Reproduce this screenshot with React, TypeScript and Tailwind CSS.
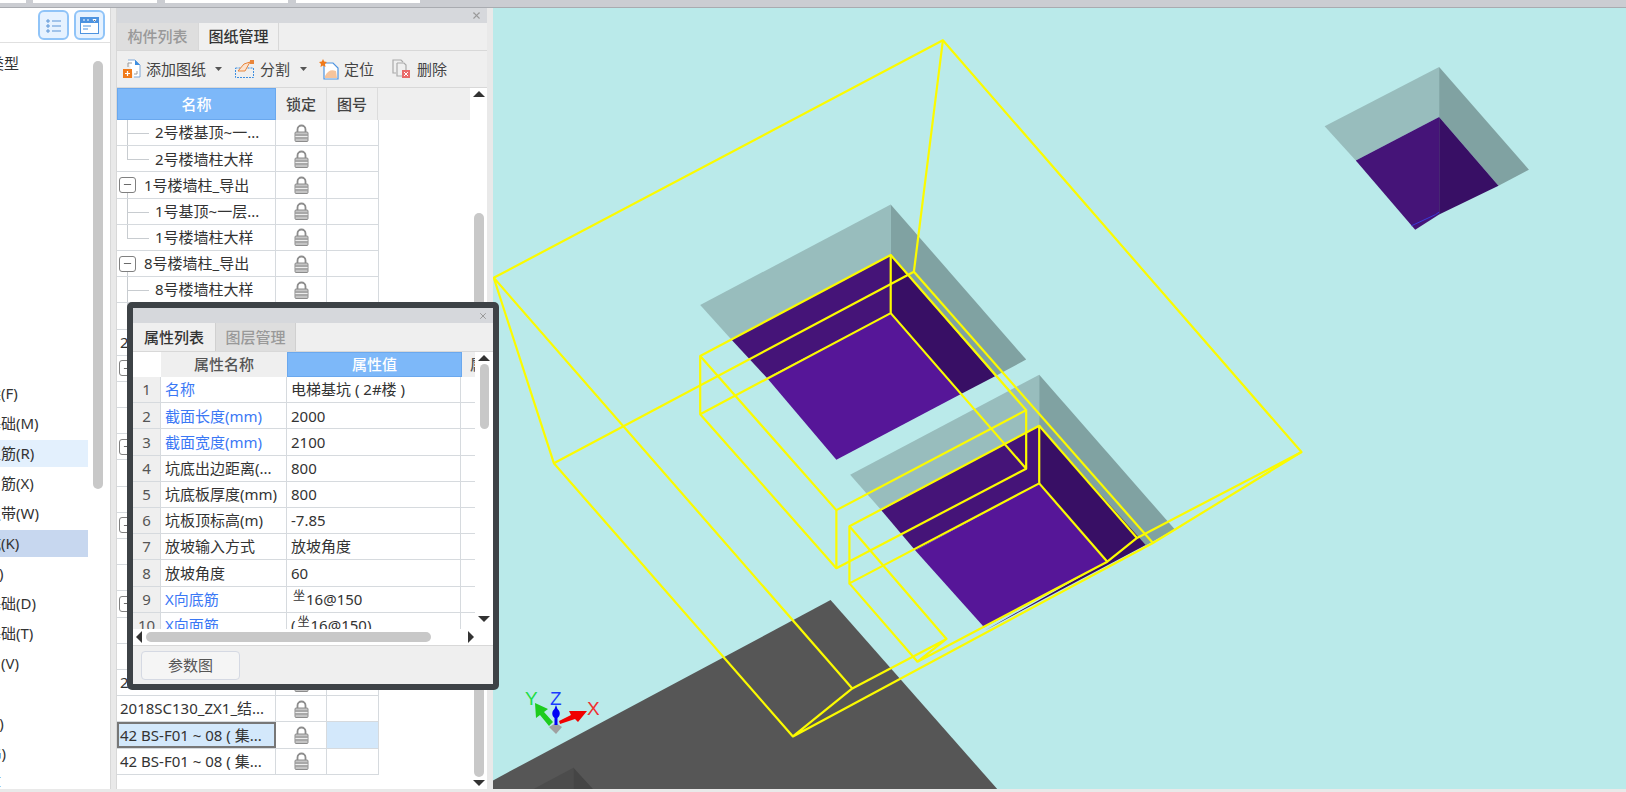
import { Minus, X } from "lucide-react"

type TreeRow = { name: string; kind: "root" | "parent" | "child" | "last"; selected?: boolean }

const drawingRows: TreeRow[] = [
    { name: "2号楼基顶~一...", kind: "child" },
    { name: "2号楼墙柱大样", kind: "last" },
    { name: "1号楼墙柱_导出", kind: "parent" },
    { name: "1号基顶~一层...", kind: "child" },
    { name: "1号楼墙柱大样", kind: "last" },
    { name: "8号楼墙柱_导出", kind: "parent" },
    { name: "8号楼墙柱大样", kind: "child" },
    { name: "8号基顶~一层...", kind: "last" },
    { name: "2018SC130_ZX...", kind: "root" },
    { name: "3号楼墙柱_导出", kind: "parent" },
    { name: "3号基顶~一层...", kind: "child" },
    { name: "3号楼墙柱大样", kind: "last" },
    { name: "5号楼墙柱_导出", kind: "parent" },
    { name: "5号基顶~一层...", kind: "child" },
    { name: "5号楼墙柱大样", kind: "last" },
    { name: "6号楼墙柱_导出", kind: "parent" },
    { name: "6号基顶~一层...", kind: "child" },
    { name: "6号楼墙柱大样", kind: "last" },
    { name: "7号楼墙柱_导出", kind: "parent" },
    { name: "7号基顶~一层...", kind: "child" },
    { name: "7号楼墙柱大样", kind: "last" },
    { name: "2018SC130_ZX1_结...", kind: "root" },
    { name: "2018SC130_ZX1_结...", kind: "root" },
    { name: "42 BS-F01 ~ 08 ( 集...", kind: "root", selected: true },
    { name: "42 BS-F01 ~ 08 ( 集...", kind: "root" },
]

// 30px rows, the text is cut off by the left edge of the window
const sideRows = [
    "常用构件类型", "", "", "", "", "", "", "", "", "", "",
    "基础梁(F)", "筏板基础(M)", "筏板主筋(R)", "筏板负筋(X)", "基础板带(W)", "集水坑(K)", "柱墩(Y)",
    "独立基础(D)", "条形基础(T)", "桩承台(V)", "桩(U)", "垫层(X)", "地沟(G)", "砖胎膜",
]

const props = [
    { label: "名称", value: "电梯基坑 ( 2#楼 )", blue: true },
    { label: "截面长度(mm)", value: "2000", blue: true },
    { label: "截面宽度(mm)", value: "2100", blue: true },
    { label: "坑底出边距离(...", value: "800" },
    { label: "坑底板厚度(mm)", value: "800" },
    { label: "坑板顶标高(m)", value: "-7.85" },
    { label: "放坡输入方式", value: "放坡角度" },
    { label: "放坡角度", value: "60" },
    { label: "X向底筋", value: "16@150", blue: true, bar: true },
    { label: "X向面筋", value: "16@150", blue: true, bar: true, paren: true },
]

// wireframe edges, in the canvas svg's own units
const edges = [
    "5,550 625,80 1120,895 915,1075 418,1458 88,917 5,550 500,1363 418,1458",
    "625,80 585,538 88,917",
    "585,538 915,1075",
    "500,1363 630,1265 590,1310 852,1112 893,1065 1120,895",
    "290,705 553,505 553,620 290,820 290,705 478,1010 478,1125 290,820",
    "553,505 740,812 740,928 553,620",
    "478,1010 740,812",
    "478,1125 740,928",
    "496,1042 758,843 758,957 496,1155 496,1042 630,1265",
    "590,1310 496,1155",
    "758,843 893,1065",
    "758,957 852,1112",
]

function Lock() {
    return (
        <svg width="15" height="18" viewBox="0 0 15 18">
            <path d="M3.500 9V5.500a4 4 0 0 1 8 0V9" fill="none" stroke="#8c8c8c" strokeWidth="1.800" />
            <rect x="1" y="8" width="13" height="9.500" rx="1" fill="#c4c4c4" stroke="#8c8c8c" />
            <path d="M1.500 11h12M1.500 14h12" stroke="#8c8c8c" />
            <path d="M1.500 12.500h12" stroke="#ececec" />
        </svg>
    )
}

function Caret({ dir }: { dir: "up" | "down" | "left" | "right" }) {
    const d = { up: "M0 7 6 1l6 6z", down: "M0 1h12L6 7z", left: "M7 0v12L1 6z", right: "M1 0v12l6-6z" }[dir]
    const box = dir === "up" || dir === "down" ? "0 0 12 8" : "0 0 8 12"
    const size = dir === "up" || dir === "down" ? "w-3 h-2" : "w-2 h-3"
    return (
        <svg viewBox={box} className={size}>
            <path d={d} fill="#333" />
        </svg>
    )
}

function TreeCell({ row }: { row: TreeRow }) {
    if (row.kind === "root") {
        return <span className={`truncate ${row.selected ? "pl-[1px]" : "pl-[3px]"}`}>{row.name}</span>
    }
    if (row.kind === "parent") {
        return (
            <>
                <span className="absolute left-[10px] top-[21px] bottom-0 w-px bg-[#c8ccd0]" />
                <span className="ml-[2px] w-[17px] h-[16px] rounded-[3px] border border-[#808080] flex items-center justify-center shrink-0 bg-white">
                    <Minus size={11} strokeWidth={1.6} color="#333" />
                </span>
                <span className="ml-2 truncate">{row.name}</span>
            </>
        )
    }
    return (
        <>
            <span className={`absolute left-[10px] top-0 w-px bg-[#c8ccd0] ${row.kind === "last" ? "h-[13px]" : "h-full"}`} />
            <span className="absolute left-[10px] top-[13px] w-[22px] h-px bg-[#c8ccd0]" />
            <span className="ml-[38px] truncate">{row.name}</span>
        </>
    )
}

function SidePanel() {
    return (
        <div className="w-[111px] bg-white border-r border-[#d8d8d8] flex flex-col overflow-hidden">
            <div className="h-[35px] shrink-0 border-b border-[#e0e0e0] flex justify-end items-center gap-[5px] pr-[5px]">
                <div className="w-[31px] h-[30px] rounded-md bg-[#e6f2ff] border-2 border-[#90c4f8] flex items-center justify-center">
                    <svg width="16" height="15" viewBox="0 0 16 15" fill="none" stroke="#5b94d6">
                        <path d="M1 2h2v2H1zM1 7h2v2H1zM1 12h2v2H1zM6 3h9M6 8h9M6 13h9" />
                    </svg>
                </div>
                <div className="w-[31px] h-[30px] rounded-md bg-[#e6f2ff] border-2 border-[#90c4f8] flex items-center justify-center">
                    <svg width="19" height="17" viewBox="0 0 19 17">
                        <rect x="0.5" y="0.5" width="18" height="16" fill="#fff" stroke="#4d93e0" />
                        <rect x="1" y="1" width="17" height="5" fill="#4d93e0" />
                        <path d="M3 3h2M7 3h2M13 2.5h3l-1.5 2z" stroke="#fff" />
                        <path d="M3 9h8M3 12h5" stroke="#4d93e0" />
                    </svg>
                </div>
            </div>
            <div className="flex-1 flex min-h-0 overflow-hidden">
                <div className="w-[88px] shrink-0 pt-[5px] overflow-hidden">
                    {sideRows.map((t, i) => (
                        <div key={i} className="h-[30px] flex items-center overflow-hidden">
                            <div className={`w-full h-[27px] flex items-center overflow-hidden ${t === "筏板主筋(R)" ? "bg-[#e3f0fd]" : ""} ${t === "集水坑(K)" ? "bg-[#c7d7ef]" : ""}`}>
                                <span className={`whitespace-nowrap text-[15px] leading-none text-[#333] ${i === 0 ? "ml-[-71px]" : "ml-[-44px]"}`}>{t}</span>
                            </div>
                        </div>
                    ))}
                </div>
                <div className="ml-[5px] mt-[18px] w-[10px] h-[428px] rounded-full bg-[#c8c8c8]" />
            </div>
        </div>
    )
}

function DrawingPanel() {
    return (
        <div className="w-[371px] ml-[5px] flex flex-col bg-white border-l border-[#d8d8d8]">
            <div className="h-[15px] shrink-0 bg-[#d6d8dc] flex items-center justify-end pr-[5px]">
                <X size={11} strokeWidth={2.4} color="#9a9a9a" />
            </div>
            <div className="h-[28px] shrink-0 bg-[#efefef] border-b border-[#d8d8d8] flex text-[15px]">
                <div className="w-[81px] bg-[#dedede] text-[#999] font-medium flex items-center justify-center">构件列表</div>
                <div className="w-[81px] border-x border-[#d8d8d8] bg-[#f0f0f0] text-[#333] font-medium flex items-center justify-center">图纸管理</div>
            </div>
            <div className="h-[37px] shrink-0 bg-[#efefef] border-b border-[#d8d8d8] flex items-center text-[15px] text-[#444]">
                <svg width="20" height="20" viewBox="0 0 20 20" className="ml-[5px]">
                    <path d="M6 1h7l5 5v12h-6" fill="#fff" stroke="#7fa8d8" />
                    <path d="M13 1v5h5z" fill="#3f8fe0" />
                    <path d="M6 8V4h4M15 12v3h-3" fill="none" stroke="#999" />
                    <rect x="1" y="10" width="9" height="9" fill="#f07a1a" />
                    <path d="M5.500 12v5M3 14.500h5" stroke="#fff" strokeWidth="1.200" />
                </svg>
                <span className="ml-[4px]">添加图纸</span>
                <span className="ml-[9px]"><svg width="7" height="4" viewBox="0 0 7 4"><path d="M0 0h7L3.500 4z" fill="#555" /></svg></span>
                <svg width="21" height="20" viewBox="0 0 21 20" className="ml-[12px]">
                    <rect x="1.500" y="9" width="18" height="9.500" fill="none" stroke="#3f8fe0" strokeDasharray="2 1" />
                    <path d="M4 12 10 5l6-2-5 9z" fill="#fbe3d0" stroke="#e9853a" />
                    <rect x="16" y="1" width="4" height="4" fill="#e9853a" />
                </svg>
                <span className="ml-[5px]">分割</span>
                <span className="ml-[10px]"><svg width="7" height="4" viewBox="0 0 7 4"><path d="M0 0h7L3.500 4z" fill="#555" /></svg></span>
                <svg width="20" height="21" viewBox="0 0 20 21" className="ml-[12px]">
                    <path d="M5 4h9l5 5v11H5z" fill="#fff" stroke="#4d93e0" strokeWidth="1.200" />
                    <path d="M6 17q4-8 11-5l1 7H6z" fill="#f6c49c" />
                    <path d="M4 0l1.200 2.600L8 3 6 5l.5 3L4 6.600 1.500 8 2 5 0 3l2.800-.4z" fill="#f07a1a" />
                </svg>
                <span className="ml-[5px]">定位</span>
                <svg width="19" height="20" viewBox="0 0 19 20" className="ml-[18px]">
                    <path d="M4 14H1V1h8l2 2" fill="none" stroke="#aaa" strokeWidth="1.200" />
                    <path d="M5 4h7l2 2v7M5 4v13h5" fill="none" stroke="#aaa" strokeWidth="1.200" />
                    <rect x="10" y="11" width="8" height="8" fill="#e96a6a" />
                    <path d="M12 13l4 4M16 13l-4 4" stroke="#fff" />
                </svg>
                <span className="ml-[6px]">删除</span>
            </div>
            <div className="flex-1 flex min-h-0">
                <div className="flex-1 min-w-0 overflow-hidden">
                    <div className="h-[32px] bg-[#efefef] flex text-[15px] font-medium text-[#444]">
                        <div className="w-[159px] bg-[#7db8f9] border border-[#6aa8ee] text-white flex items-center justify-center">名称</div>
                        <div className="w-[51px] border-r border-[#dcdcdc] flex items-center justify-center">锁定</div>
                        <div className="w-[51px] border-r border-[#dcdcdc] flex items-center justify-center">图号</div>
                    </div>
                    {drawingRows.map((row, i) => (
                        <div key={i} className="h-[26.2px] w-[262px] flex text-[15px] text-[#333] border-b border-[#d6dade]">
                            <div className={`relative w-[159px] shrink-0 flex items-center overflow-hidden ${row.selected ? "bg-[#d3e8fb] border-2 border-[#777]" : "border-r border-[#d6dade]"}`}>
                                <TreeCell row={row} />
                            </div>
                            <div className="w-[51px] border-r border-[#d6dade] flex items-center justify-center">
                                <Lock />
                            </div>
                            <div className={`w-[52px] border-r border-[#d6dade] ${row.selected ? "bg-[#d3e8fb]" : ""}`} />
                        </div>
                    ))}
                </div>
                <div className="w-[17px] shrink-0 flex flex-col items-center pt-[2px] pb-[2px]">
                    <Caret dir="up" />
                    <div className="mt-[115px] w-[10px] flex-1 rounded-full bg-[#c8c8c8]" />
                    <div className="mt-[2px]"><Caret dir="down" /></div>
                </div>
            </div>
        </div>
    )
}

function PropertyPanel() {
    return (
        <div className="absolute left-[127px] top-[302px] w-[372px] h-[388px] bg-[#3d4246] rounded-[5px] p-[6px] text-[15px]">
            <div className="w-full h-full flex flex-col bg-white">
                <div className="h-[15px] shrink-0 bg-[#d6d8dc] flex items-center justify-end pr-[5px]">
                    <X size={10} strokeWidth={2.4} color="#9a9a9a" />
                </div>
                <div className="h-[29px] shrink-0 bg-[#efefef] border-b border-[#d8d8d8] flex">
                    <div className="w-[82px] text-[#333] font-medium flex items-center justify-center">属性列表</div>
                    <div className="w-[81px] bg-[#dedede] border-x border-[#d0d0d0] text-[#999] font-medium flex items-center justify-center">图层管理</div>
                </div>
                <div className="h-[277px] shrink-0 flex overflow-hidden">
                    <div className="flex-1 min-w-0 overflow-hidden">
                        <div className="h-[25px] flex font-medium text-[#555]">
                            <div className="w-[28px] shrink-0" />
                            <div className="w-[126px] shrink-0 bg-[#efefef] flex items-center justify-center">属性名称</div>
                            <div className="w-[175px] shrink-0 bg-[#7db8f9] border border-[#6aa8ee] text-white flex items-center justify-center">属性值</div>
                            <div className="flex-1 bg-[#efefef] overflow-hidden pl-2 whitespace-nowrap flex items-center">属性</div>
                        </div>
                        {props.map((p, i) => (
                            <div key={i} className="h-[26.2px] flex border-b border-[#d6dade] text-[#333]">
                                <div className="w-[28px] shrink-0 bg-[#efefef] border-r border-[#d6dade] flex items-center justify-center text-[#555]">{i + 1}</div>
                                <div className={`w-[126px] shrink-0 border-r border-[#d6dade] pl-1 flex items-center whitespace-nowrap overflow-hidden ${p.blue ? "text-[#3b78f5]" : ""}`}>{p.label}</div>
                                <div className="w-[174px] shrink-0 border-r border-[#d6dade] pl-1 flex items-center whitespace-nowrap overflow-hidden">
                                    {p.paren && <span>(</span>}
                                    {p.bar && <span className="text-[12px] leading-none ml-[2px] mr-[1px] -translate-y-[3px]">坐</span>}
                                    <span>{p.value}</span>
                                    {p.paren && <span>)</span>}
                                </div>
                            </div>
                        ))}
                    </div>
                    <div className="w-[18px] shrink-0 flex flex-col items-center pt-[2px] pb-[6px]">
                        <Caret dir="up" />
                        <div className="mt-[2px] w-[9px] h-[65px] rounded-full bg-[#c8c8c8]" />
                        <div className="mt-auto"><Caret dir="down" /></div>
                    </div>
                </div>
                <div className="h-[17px] shrink-0 flex items-center border-b border-[#d8d8d8] px-[2px]">
                    <Caret dir="left" />
                    <div className="ml-[3px] w-[285px] h-[10px] rounded-full bg-[#c8c8c8]" />
                    <div className="ml-auto mr-[16px]"><Caret dir="right" /></div>
                </div>
                <div className="flex-1 bg-[#efefef] flex items-center pl-2">
                    <div className="w-[99px] h-[29px] rounded-[4px] bg-[#f5f5f5] border border-[#d5d9e3] flex items-center justify-center text-[#555]">参数图</div>
                </div>
            </div>
        </div>
    )
}

function AxisGizmo() {
    return (
        <svg width="90" height="60" viewBox="0 0 90 60" className="absolute left-[515px] top-[680px] [font-family:'Liberation_Sans',sans-serif]">
            <path d="M34 47l7-4 6 4-6 7z" fill="#a0a0a0" />
            <path d="M20 23l13 6-4 3 9 10-4 4-9-11-4 3z" fill="#1ecc1e" />
            <path d="M45 44l-1-3 12-6-2-4h18l-9 11-3-3z" fill="#f00000" />
            <path d="M39.500 45V38c-3-2-3-7 0-9l1.500-4 1.500 4c3 2 3 7 0 9v7z" fill="#0000f5" />
            <text x="10" y="25" fontSize="19" fill="#22dd44">Y</text>
            <text x="35" y="25" fontSize="19" fill="#1a3cff">Z</text>
            <text x="72" y="35" fontSize="19" fill="#f03030">X</text>
        </svg>
    )
}

function Canvas() {
    return (
        <div className="ml-[6px] flex-1 bg-[#baeaea] overflow-hidden">
            <svg viewBox="4 16 1564 1546" preserveAspectRatio="none" className="block w-full h-full">
                <polygon points="470,1188 700,1562 0,1562 0,1548" fill="#565656" />
                <polygon points="115,1520 60,1562 115,1562" fill="#4c4c4c" />
                <polygon points="115,1520 115,1562 142,1562" fill="#454545" />

                <polygon points="1152,250 1310,133 1310,232 1195,318" fill="#98bdbd" />
                <polygon points="1310,133 1434,336 1392,368 1310,232" fill="#80a2a2" />
                <polygon points="1195,318 1310,232 1310,425 1277,455" fill="#451478" />
                <polygon points="1310,232 1392,368 1310,425" fill="#380f65" />
                <polyline points="1272,447 1305,425 1310,420" fill="none" stroke="#3a3ad8" strokeWidth="1" vectorEffect="non-scaling-stroke" />

                <polygon points="290,604 553,405 553,505 333,672" fill="#98bdbd" />
                <polygon points="553,405 740,712 697,745 553,505" fill="#80a2a2" />
                <polygon points="333,672 553,505 553,620 382,748" fill="#451478" />
                <polygon points="553,505 697,745 650,780 553,620" fill="#380f65" />
                <polygon points="553,620 650,780 478,910 382,748" fill="#561698" />

                <polygon points="497,940 758,742 758,843 540,1010" fill="#98bdbd" />
                <polygon points="758,742 945,1048 905,1080 758,843" fill="#80a2a2" />
                <polygon points="540,1010 758,843 758,957 587,1090" fill="#451478" />
                <polygon points="758,843 905,1079 683,1248 852,1112 758,957" fill="#380f65" />
                <polygon points="758,957 852,1112 682,1242 587,1090" fill="#561698" />

                {edges.map((pts, i) => (
                    <polyline key={i} points={pts} fill="none" stroke="#fbfb00" strokeWidth="2.2" strokeLinejoin="round" vectorEffect="non-scaling-stroke" />
                ))}
            </svg>
        </div>
    )
}

export default function App() {
    return (
        <div className="relative w-[1626px] h-[792px] overflow-hidden bg-[#e9e9e9] flex flex-col [font-family:'Noto_Sans','Noto_Sans_CJK_SC',sans-serif]">
            {/* window tabs, cut off by the top of the screenshot */}
            <div className="h-2 shrink-0 bg-[#cbcdd2] border-b border-[#a9abb0] flex items-start">
                <div className="w-[26px] h-[3px] bg-white" />
                <div className="ml-[7px] w-[124px] h-[3px] bg-white" />
                <div className="ml-[8px] w-[123px] h-[3px] bg-white" />
                <div className="ml-[8px] w-[124px] h-[3px] bg-white" />
            </div>
            <div className="flex h-[781px] shrink-0">
                <SidePanel />
                <DrawingPanel />
                <Canvas />
            </div>
            <PropertyPanel />
            <AxisGizmo />
        </div>
    )
}
